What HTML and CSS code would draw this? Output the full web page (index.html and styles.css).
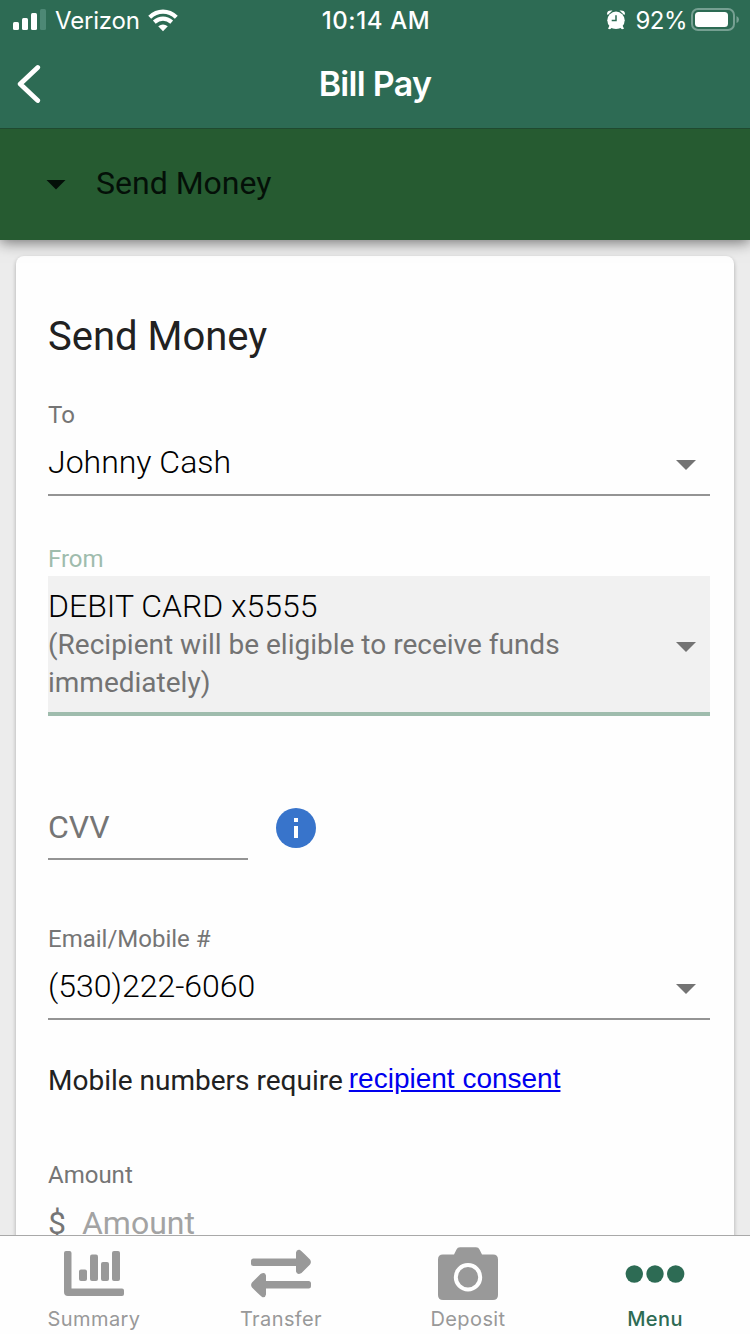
FILE: index.html
```html
<!DOCTYPE html>
<html lang="en">
<head>
<meta charset="utf-8">
<title>Bill Pay</title>
<link rel="stylesheet" href="styles.css">
</head>
<body>
<div class="app">
  <header class="header">
    <div class="status">
      <div class="status-left">
        <svg class="signal" width="34" height="22" viewBox="0 0 34 22"><g fill="#fff"><rect x="0" y="13" width="6" height="8" rx="1.5"/><rect x="9" y="9" width="6" height="12" rx="1.5"/><rect x="18" y="4" width="6" height="17" rx="1.5"/><rect x="27" y="0" width="6" height="21" rx="1.5" fill="#4d8875"/></g></svg>
        <span class="carrier">Verizon</span>
        <svg class="wifi" width="30" height="23" viewBox="0 0 30 23"><g fill="none" stroke="#fff" stroke-width="4.2"><path d="M1.7 8.2Q7.6 2.6 15 2.6T28.3 8.2"/><path d="M6.300 13.200Q10.400 9.700 15 9.700T23.700 13.200"/></g><path fill="#fff" d="M10.200 17.300Q15 13.500 19.800 17.300L15 22.200Z"/></svg>
      </div>
      <span class="clock">10:14 AM</span>
      <div class="status-right">
        <svg class="alarm" width="18" height="20" viewBox="0 0 18 20"><g fill="#fff"><path d="M0 4Q0 0 5.5.6L.8 4.9ZM18 4Q18 0 12.500.6L17.200 4.900Z"/><path d="M2.500 15.500L1 18.800 3 19.300 6 17ZM15.500 15.500L17 18.800 15 19.300 12 17Z"/><circle cx="9" cy="10.300" r="8.700"/></g><path d="M9 5.300V10.500H4.700" fill="none" stroke="#2d6b54" stroke-width="1.500"/></svg>
        <span class="percent">92%</span>
        <svg class="battery" width="48" height="24" viewBox="0 0 48 24"><rect x="1" y="1" width="42" height="21" rx="6" fill="none" stroke="#76a092" stroke-width="2"/><rect x="4" y="4" width="33" height="15" rx="3.500" fill="#fff"/><path d="M45.500 8Q48 9 48 11.500T45.500 15Z" fill="#76a092"/></svg>
      </div>
    </div>
    <div class="titlebar">
      <svg class="back" width="24" height="40" viewBox="0 0 24 40"><path d="M20.700 3.500L3.200 20 20.700 36.500" fill="none" stroke="#fff" stroke-width="4.800" stroke-linecap="round" stroke-linejoin="round"/></svg>
      <h1 class="title">Bill Pay</h1>
    </div>
  </header>

  <div class="section-bar">
    <span class="caret caret-dark"></span>
    <span class="section-name">Send Money</span>
  </div>

  <main class="content">
    <form class="card">
      <h2 class="card-title">Send Money</h2>
      <div class="field to">
        <label class="label label-to">To</label>
        <div class="select"><span class="value name">Johnny Cash</span><span class="caret"></span></div>
      </div>
      <div class="field from">
        <label class="label label-from">From</label>
        <div class="select select-focus">
          <div class="source"><span class="value account">DEBIT CARD x5555</span><span class="hint">(Recipient will be eligible to receive funds<br>immediately)</span></div>
          <span class="caret"></span>
        </div>
      </div>
      <div class="cvv-row">
        <div class="cvv">CVV</div>
        <svg class="info" width="40" height="40" viewBox="0 0 40 40"><circle cx="20" cy="20" r="20" fill="#3874cb"/><path d="M18 10h4v4h-4zM18 18h4v12h-4z" fill="#fff"/></svg>
      </div>
      <div class="field contact">
        <label class="label label-contact">Email/Mobile #</label>
        <div class="select"><span class="value phone">(530)222-6060</span><span class="caret"></span></div>
      </div>
      <p class="consent"><span class="consent-text">Mobile numbers require</span><a class="link" href="#">recipient consent</a></p>
      <div class="field amount">
        <label class="label label-amount">Amount</label>
        <div class="amount-input"><span class="dollar">$</span><span class="placeholder">Amount</span></div>
      </div>
    </form>
  </main>

  <nav class="tabs">
    <div class="tab">
      <svg class="tab-icon" width="60" height="54" viewBox="0 0 60 54"><g fill="#999"><path d="M2 3H5.500Q7.500 3 7.500 5V40.500H58Q60 40.500 60 42.500V46Q60 48 58 48H4Q0 48 0 44V5Q0 3 2 3Z"/><rect x="15" y="21.500" width="8" height="11.500" rx="2"/><rect x="26" y="6.500" width="8" height="26.500" rx="2"/><rect x="37" y="14" width="8" height="19" rx="2"/><rect x="48" y="3" width="8" height="30" rx="2"/></g></svg>
      <span class="tab-label">Summary</span>
    </div>
    <div class="tab">
      <svg class="tab-icon" width="60" height="54" viewBox="0 0 60 54"><g fill="#999"><path d="M2.500 10.500H45V4.500Q45.500 1.300 48.500 1.800 50 2.500 59 11.500 60.800 14 59 16.500L50.500 25Q46 27.500 45 23.500V18H2.500Q0 18 0 15.500V13Q0 10.500 2.500 10.500Z"/><path transform="rotate(180 30 25.500)" d="M2.500 10.500H45V4.500Q45.500 1.300 48.500 1.800 50 2.500 59 11.500 60.800 14 59 16.500L50.500 25Q46 27.500 45 23.500V18H2.500Q0 18 0 15.500V13Q0 10.500 2.500 10.500Z"/></g></svg>
      <span class="tab-label">Transfer</span>
    </div>
    <div class="tab">
      <svg class="tab-icon" width="60" height="54" viewBox="0 0 60 54"><path fill="#999" d="M5 6.500H16L18.500 1.500Q19.500-.7 22-.7H38Q40.500-.7 41.500 1.500L44 6.500H55Q60 6.500 60 11.500V47Q60 52 55 52H5Q0 52 0 47V11.500Q0 6.500 5 6.500Z"/><circle cx="30" cy="29.300" r="12.200" fill="none" stroke="#fff" stroke-width="4"/></svg>
      <span class="tab-label">Deposit</span>
    </div>
    <div class="tab tab-active">
      <svg class="tab-icon" width="60" height="54" viewBox="0 0 60 54"><g fill="#2d6b54"><circle cx="9.300" cy="26" r="8.700"/><circle cx="30" cy="26" r="8.700"/><circle cx="50.700" cy="26" r="8.700"/></g></svg>
      <span class="tab-label">Menu</span>
    </div>
  </nav>
</div>
</body>
</html>
```

FILE: styles.css
```css
* { box-sizing: border-box; }
body { margin: 0; background: #ececec; }
h1, h2, p { margin: 0; font-weight: 400; }
svg { display: block; flex: none; }

.app {
  display: flex;
  flex-direction: column;
  width: 750px;
  height: 1334px;
  overflow: hidden;
  font-family: Roboto, sans-serif;
  white-space: nowrap;
}

.header {
  flex: none;
  height: 129px;
  background: #2d6b54;
  border-bottom: 1px solid #1f4a30;
  color: #fff;
  font-family: Inter, sans-serif;
}
.status {
  display: grid;
  grid-template-columns: 1fr auto 1fr;
  align-items: center;
  height: 40px;
  padding: 0 11px 0 13px;
  font-size: 24px;
  line-height: 38px;
}
.status-left, .status-right { display: flex; align-items: center; }
.status-right { justify-content: flex-end; }
.carrier { margin-left: 8px; padding-top: 2px; letter-spacing: -0.2px; }
.wifi { margin-left: 8px; }
.clock { padding-top: 2px; font-weight: 500; letter-spacing: 0.6px; }
.percent { margin: 0 4px 0 10px; padding-top: 2px; letter-spacing: -0.5px; }
.titlebar {
  display: grid;
  grid-template-columns: 24px 1fr 24px;
  align-items: center;
  height: 88px;
  padding: 0 17px;
}
.title { text-align: center; font-size: 34px; font-weight: 600; letter-spacing: -0.7px; line-height: 44px; }

.section-bar {
  flex: none;
  display: flex;
  align-items: center;
  height: 111px;
  padding-left: 46px;
  background: #265b31;
  box-shadow: 0 2px 14px rgba(0, 0, 0, 0.55);
  clip-path: inset(0 0 -30px 0);
  z-index: 1;
}
.section-name { margin-left: 30px; color: #041008; font-size: 32px; line-height: 40px; padding-bottom: 4px; }

.caret {
  flex: none;
  width: 20px;
  height: 10px;
  margin-top: 4px;
  background: #737373;
  clip-path: polygon(0 0, 100% 0, 50% 100%);
}
.caret-dark { margin-top: 0; background: #041008; }

.content { flex: 1; min-height: 0; padding: 16px 16px 0; overflow: hidden; }
.card {
  height: 1100px;
  padding: 49px 24px 0 32px;
  background: #fefefe;
  border-radius: 8px;
  box-shadow: 0 2px 4px rgba(0, 0, 0, 0.28);
}
.card-title { color: #212121; font-size: 40px; line-height: 64px; }
.label { display: block; color: #757575; font-size: 24px; line-height: 28px; }
.select {
  display: flex;
  align-items: center;
  justify-content: space-between;
  height: 67px;
  padding: 3px 14px 0 0;
  border-bottom: 2px solid #949494;
}
.value { color: #000; font-size: 32px; font-weight: 300; line-height: 40px; }
.name, .phone { margin-bottom: 2px; }
.to { margin-top: 32px; }
.from { margin-top: 49px; }
.label-from { color: #9fbcad; height: 31px; }
.select-focus { height: 140px; padding-top: 0; border-bottom: 4px solid #9fbcad; background: #f1f1f1; }
.select-focus .caret { margin-top: 6px; }
.source { display: flex; flex-direction: column; }
.hint { color: #737373; font-size: 28px; line-height: 38px; }
.cvv-row { display: flex; align-items: center; gap: 28px; height: 64px; margin-top: 80px; }
.cvv { width: 200px; height: 64px; color: #757575; font-size: 32px; line-height: 62px; border-bottom: 2px solid #949494; }
.contact { margin-top: 65px; }
.consent { display: flex; align-items: baseline; margin-top: 41px; color: #212121; font-size: 28px; line-height: 40px; }
.link { color: #0000ee; font-family: "Liberation Sans", Arial, sans-serif; margin: 0 0 0 6px; align-self: flex-start; line-height: 36px; }
.amount { margin-top: 60px; }
.amount-input { display: flex; align-items: center; height: 68px; font-size: 32px; line-height: 40px; color: #757575; }
.placeholder { margin-left: 16px; color: #a3a3a3; }

.tabs {
  flex: none;
  display: grid;
  grid-template-columns: repeat(4, 187px);
  height: 99px;
  border-top: 1px solid #a9a9a9;
  background: #fefefe;
  color: #999;
  font-family: Inter, sans-serif;
  z-index: 1;
}
.tab { display: flex; flex-direction: column; align-items: center; padding-top: 12px; }
.tab-icon { overflow: visible; }
.tab-label { margin: 5px 0 0 1px; font-size: 20px; line-height: 24px; letter-spacing: 0.4px; }
.tab-active { color: #2d6b54; font-weight: 500; }
```
